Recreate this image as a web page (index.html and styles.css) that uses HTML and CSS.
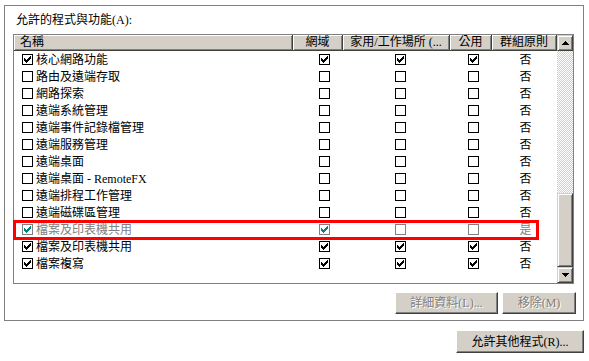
FILE: index.html
```html
<!DOCTYPE html>
<html lang="zh-Hant">
<head>
  <meta charset="UTF-8" />
  <title>允許的程式與功能</title>
  <link rel="stylesheet" href="styles.css">
</head>
<body>
  <div class="group">
    <div class="label">允許的程式與功能(A):</div>

    <div class="list">
      <div class="cols">
        <div class="head">
          <div class="name">名稱</div>
          <div>網域</div>
          <div>家用/工作場所 (...</div>
          <div>公用</div>
          <div>群組原則</div>
        </div>

        <div class="row"><div class="name"><span class="cb on"></span>核心網路功能</div><div><span class="cb on"></span></div><div><span class="cb on"></span></div><div><span class="cb on"></span></div><div>否</div></div>
        <div class="row"><div class="name"><span class="cb"></span>路由及遠端存取</div><div><span class="cb"></span></div><div><span class="cb"></span></div><div><span class="cb"></span></div><div>否</div></div>
        <div class="row"><div class="name"><span class="cb"></span>網路探索</div><div><span class="cb"></span></div><div><span class="cb"></span></div><div><span class="cb"></span></div><div>否</div></div>
        <div class="row"><div class="name"><span class="cb"></span>遠端系統管理</div><div><span class="cb"></span></div><div><span class="cb"></span></div><div><span class="cb"></span></div><div>否</div></div>
        <div class="row"><div class="name"><span class="cb"></span>遠端事件記錄檔管理</div><div><span class="cb"></span></div><div><span class="cb"></span></div><div><span class="cb"></span></div><div>否</div></div>
        <div class="row"><div class="name"><span class="cb"></span>遠端服務管理</div><div><span class="cb"></span></div><div><span class="cb"></span></div><div><span class="cb"></span></div><div>否</div></div>
        <div class="row"><div class="name"><span class="cb"></span>遠端桌面</div><div><span class="cb"></span></div><div><span class="cb"></span></div><div><span class="cb"></span></div><div>否</div></div>
        <div class="row"><div class="name"><span class="cb"></span>遠端桌面 - RemoteFX</div><div><span class="cb"></span></div><div><span class="cb"></span></div><div><span class="cb"></span></div><div>否</div></div>
        <div class="row"><div class="name"><span class="cb"></span>遠端排程工作管理</div><div><span class="cb"></span></div><div><span class="cb"></span></div><div><span class="cb"></span></div><div>否</div></div>
        <div class="row"><div class="name"><span class="cb"></span>遠端磁碟區管理</div><div><span class="cb"></span></div><div><span class="cb"></span></div><div><span class="cb"></span></div><div>否</div></div>
        <div class="row dis"><div class="name"><span class="cb on"></span>檔案及印表機共用</div><div><span class="cb on"></span></div><div><span class="cb"></span></div><div><span class="cb"></span></div><div>是</div></div>
        <div class="row"><div class="name"><span class="cb on"></span>檔案及印表機共用</div><div><span class="cb on"></span></div><div><span class="cb on"></span></div><div><span class="cb on"></span></div><div>否</div></div>
        <div class="row"><div class="name"><span class="cb on"></span>檔案複寫</div><div><span class="cb on"></span></div><div><span class="cb on"></span></div><div><span class="cb on"></span></div><div>否</div></div>
      </div>

      <div class="sbar">
        <div class="raised arrow"><svg width="7" height="4" viewBox="0 0 7 4"><path d="M3 0h1v1h1v1h1v1h1v1H0V3h1V2h1V1h1z"/></svg></div>
        <div class="track"></div>
        <div class="raised thumb"></div>
        <div class="raised arrow"><svg width="7" height="4" viewBox="0 0 7 4"><path d="M0 0h7v1H6v1H5v1H4v1H3V3H2V2H1V1H0z"/></svg></div>
      </div>
    </div>

    <div class="actions">
      <button class="raised btn dis details">詳細資料(L)...</button>
      <button class="raised btn dis remove">移除(M)</button>
    </div>
  </div>

  <button class="raised btn more">允許其他程式(R)...</button>
</body>
</html>
```

FILE: styles.css
```css
body {
  margin: 0;
  background: #fff;
  color: #000;
  font: 12px/14px "Liberation Serif", "Noto Sans CJK TC", serif;
}

.group {
  margin: 5px 5px 0 4px;
  border: 1px solid #808080;
  padding: 0 7px 6px 8px;
}
.label { margin: 7px 0 7px 3px; }

.list {
  width: 561px;
  height: 250px;
  box-sizing: border-box;
  border: 1px solid #808080;
  display: flex;
}
.cols { width: 543px; }

.head, .row {
  display: grid;
  grid-template-columns: 279px 50px 107px 42px 65px;
}
.head > div {
  box-sizing: border-box;
  height: 16px;
  background: #d4d0c8;
  border-right: 1px solid #404040;
  border-bottom: 1px solid #404040;
  box-shadow: inset 1px 1px #fff, inset -1px -1px #808080;
  text-align: center;
  line-height: 15px;
  white-space: nowrap;
  overflow: hidden;
}
.head > .name { text-align: left; padding-left: 6px; }

.row { height: 17px; }
.row > div { display: flex; align-items: center; justify-content: center; white-space: nowrap; }
.row > .name { justify-content: flex-start; padding-left: 8px; gap: 3px; }
/* checkbox columns sit a little right of centre */
.row > div:nth-child(2) { padding-left: 12px; }
.row > div:nth-child(3) { padding-left: 8px; }
.row > div:nth-child(4) { padding-left: 5px; }
.row > div:nth-child(5) { padding-left: 2px; }

.cb {
  position: relative;
  width: 11px;
  height: 11px;
  box-sizing: border-box;
  border: 1px solid #000;
  background: #fff;
  color: #000;
  flex: none;
}
.cb.on::after {
  content: "";
  position: absolute;
  left: 0; top: 0;
  width: 1px; height: 1px;
  box-shadow:
    1px 3px currentColor, 1px 4px currentColor, 1px 5px currentColor,
    2px 4px currentColor, 2px 5px currentColor, 2px 6px currentColor,
    3px 5px currentColor, 3px 6px currentColor, 3px 7px currentColor,
    4px 4px currentColor, 4px 5px currentColor, 4px 6px currentColor,
    5px 3px currentColor, 5px 4px currentColor, 5px 5px currentColor,
    6px 2px currentColor, 6px 3px currentColor, 6px 4px currentColor,
    7px 1px currentColor, 7px 2px currentColor, 7px 3px currentColor;
}

.row.dis { position: relative; color: #808080; }
.row.dis .cb { border-color: #808080; color: #008080; }
.row.dis::after {
  content: "";
  position: absolute;
  left: -1px; top: -1px;
  width: 526px; height: 20px;
  box-sizing: border-box;
  border: 3px solid #f00;
}

.raised {
  box-sizing: border-box;
  background: #d4d0c8;
  border: 1px solid;
  border-color: #fff #404040 #404040 #fff;
  box-shadow: inset -1px -1px #808080;
}

.sbar { width: 16px; display: flex; flex-direction: column; }
.arrow {
  height: 16px;
  border-color: #d4d0c8 #404040 #404040 #d4d0c8;
  box-shadow: inset 1px 1px #fff, inset -1px -1px #808080;
  display: flex; align-items: center; justify-content: center;
}
.arrow svg { display: block; }
.track {
  flex: 1;
  background: repeating-conic-gradient(#d4d0c8 0 25%, #fff 0 50%) 0 0 / 2px 2px;
}
.thumb {
  height: 74px;
  border-color: #d4d0c8 #404040 #404040 #d4d0c8;
  box-shadow: inset 1px 1px #fff, inset -1px -1px #808080;
}

.actions { display: flex; justify-content: flex-end; gap: 4px; margin-top: 8px; }
.btn {
  height: 22px;
  padding: 0;
  font: inherit;
  color: #000;
  text-align: center;
  line-height: 20px;
}
.btn.dis { color: #808080; text-shadow: 1px 1px #fff; }
.details { width: 103px; }
.remove { width: 74px; }
.more { display: block; width: 128px; height: 23px; margin: 9px 5px 0 auto; }
```
